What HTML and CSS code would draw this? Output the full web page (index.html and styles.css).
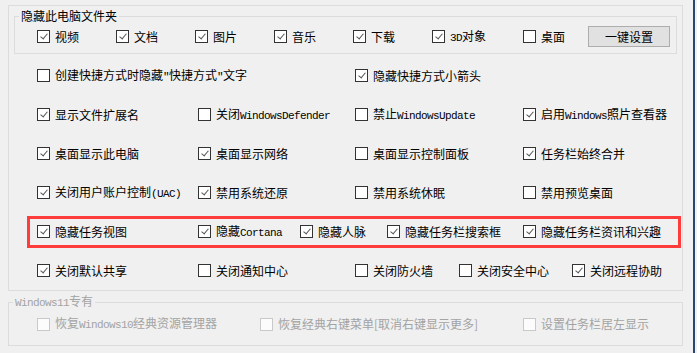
FILE: index.html
```html
<!DOCTYPE html>
<html>
<head>
<meta charset="utf-8">
<link rel="stylesheet" href="styles.css">
</head>
<body>
<div class="panel">
  <fieldset class="group">
    <legend>隐藏此电脑文件夹</legend>
    <div class="grow">
      <label class="cb w79"><span class="box on"></span><span class="t">视频</span></label>
      <label class="cb w79"><span class="box on"></span><span class="t">文档</span></label>
      <label class="cb w79"><span class="box on"></span><span class="t">图片</span></label>
      <label class="cb w79"><span class="box on"></span><span class="t">音乐</span></label>
      <label class="cb w79"><span class="box on"></span><span class="t">下载</span></label>
      <label class="cb w91"><span class="box on"></span><span class="t"><span class="en">3D</span>对象</span></label>
      <label class="cb w65"><span class="box"></span><span class="t">桌面</span></label>
      <button class="btn">一键设置</button>
    </div>
  </fieldset>
  <div class="rows">
    <div class="row">
      <label class="cb w318"><span class="box"></span><span class="t">创建快捷方式时隐藏<span class="en">"</span>快捷方式<span class="en">"</span>文字</span></label>
      <label class="cb"><span class="box on"></span><span class="t">隐藏快捷方式小箭头</span></label>
    </div>
    <div class="row">
      <label class="cb w161"><span class="box on"></span><span class="t">显示文件扩展名</span></label>
      <label class="cb w157"><span class="box"></span><span class="t">关闭<span class="en">WindowsDefender</span></span></label>
      <label class="cb w168"><span class="box"></span><span class="t">禁止<span class="en">WindowsUpdate</span></span></label>
      <label class="cb"><span class="box on"></span><span class="t">启用<span class="en">Windows</span>照片查看器</span></label>
    </div>
    <div class="row">
      <label class="cb w161"><span class="box on"></span><span class="t">桌面显示此电脑</span></label>
      <label class="cb w157"><span class="box on"></span><span class="t">桌面显示网络</span></label>
      <label class="cb w168"><span class="box"></span><span class="t">桌面显示控制面板</span></label>
      <label class="cb"><span class="box on"></span><span class="t">任务栏始终合并</span></label>
    </div>
    <div class="row">
      <label class="cb w161"><span class="box on"></span><span class="t">关闭用户账户控制<span class="en">(UAC)</span></span></label>
      <label class="cb w157"><span class="box on"></span><span class="t">禁用系统还原</span></label>
      <label class="cb w168"><span class="box"></span><span class="t">禁用系统休眠</span></label>
      <label class="cb"><span class="box"></span><span class="t">禁用预览桌面</span></label>
    </div>
    <div class="row hl">
      <div class="hlbox">
        <label class="cb w161"><span class="box on"></span><span class="t">隐藏任务视图</span></label>
        <label class="cb w102"><span class="box on"></span><span class="t">隐藏<span class="en">Cortana</span></span></label>
        <label class="cb w87"><span class="box on"></span><span class="t">隐藏人脉</span></label>
        <label class="cb w136"><span class="box on"></span><span class="t">隐藏任务栏搜索框</span></label>
        <label class="cb"><span class="box on"></span><span class="t">隐藏任务栏资讯和兴趣</span></label>
      </div>
    </div>
    <div class="row">
      <label class="cb w161"><span class="box on"></span><span class="t">关闭默认共享</span></label>
      <label class="cb w157"><span class="box"></span><span class="t">关闭通知中心</span></label>
      <label class="cb w104"><span class="box"></span><span class="t">关闭防火墙</span></label>
      <label class="cb w113"><span class="box"></span><span class="t">关闭安全中心</span></label>
      <label class="cb"><span class="box on"></span><span class="t">关闭远程协助</span></label>
    </div>
  </div>
</div>
<fieldset class="win11">
  <legend><span class="en">Windows11</span>专有</legend>
  <div class="wrow">
    <label class="cb dis w223"><span class="box"></span><span class="t">恢复<span class="en">Windows10</span>经典资源管理器</span></label>
    <label class="cb dis w263"><span class="box"></span><span class="t">恢复经典右键菜单[取消右键显示更多]</span></label>
    <label class="cb dis"><span class="box"></span><span class="t">设置任务栏居左显示</span></label>
  </div>
</fieldset>
<div class="edge"></div>
</body>
</html>
```

FILE: styles.css
```css
html, body {
  margin: 0;
  padding: 0;
  background: #f0f0f0;
  width: 697px;
  height: 353px;
  overflow: hidden;
  position: relative;
}
body {
  font-family: "Noto Sans CJK SC", sans-serif;
  font-size: 12px;
  color: #000;
}
.en {
  font-family: "Liberation Mono", monospace;
  font-size: 11px;
  letter-spacing: -0.6px;
}
.panel {
  box-sizing: border-box;
  margin: 5px 0 0 8px;
  width: 675px;
  height: 286px;
  border: 1px solid #dcdcdc;
}
fieldset {
  margin: 0;
  padding: 0;
  border: 1px solid #dcdcdc;
  min-width: 0;
}
legend {
  padding: 0 2px;
  line-height: 14px;
  font-size: 12px;
}
.group {
  box-sizing: border-box;
  margin: 3px 0 0 5px;
  width: 663px;
  padding: 3px 0 6px 22px;
}
.group legend {
  margin-left: -18px;
}
.grow {
  display: flex;
  align-items: center;
  height: 21px;
}
.btn {
  box-sizing: border-box;
  width: 82px;
  height: 21px;
  margin: 0;
  padding: 0;
  border: 1px solid #adadad;
  background: #e1e1e1;
  font-family: "Noto Sans CJK SC", sans-serif;
  font-size: 12px;
  color: #000;
  line-height: 18px;
}
.rows {
  margin-top: 2px;
}
.row {
  display: flex;
  align-items: center;
  height: 39px;
  padding-left: 28px;
}
.row.hl {
  padding-left: 18px;
}
.hlbox {
  box-sizing: border-box;
  display: flex;
  align-items: center;
  width: 654px;
  height: 32px;
  border: 3px solid #ff3c3c;
  padding-left: 7px;
}
.cb {
  display: flex;
  align-items: center;
  flex: none;
  white-space: nowrap;
  line-height: 14px;
}
.box {
  box-sizing: border-box;
  width: 13px;
  height: 13px;
  border: 1px solid #333;
  background: #fff;
  margin-right: 5px;
  flex: none;
  position: relative;
}
.box.on::after {
  content: "";
  position: absolute;
  left: 3.5px;
  top: 1px;
  width: 3px;
  height: 6px;
  border-right: 1.3px solid #555;
  border-bottom: 1.3px solid #555;
  transform: rotate(40deg);
  transform-origin: center;
}
.dis {
  color: #a3a3a3;
}
.dis .box {
  border-color: #c9c9c9;
  background: #fcfcfc;
}
.w65 { width: 65px; }
.w79 { width: 79px; }
.w87 { width: 87px; }
.w91 { width: 91px; }
.w102 { width: 102px; }
.w104 { width: 104px; }
.w113 { width: 113px; }
.w136 { width: 136px; }
.w157 { width: 157px; }
.w161 { width: 161px; }
.w168 { width: 168px; }
.w223 { width: 223px; }
.w263 { width: 263px; }
.w318 { width: 318px; }
.win11 {
  box-sizing: border-box;
  margin: 3px 0 0 8px;
  width: 675px;
  padding: 3px 0 10px 28px;
}
.win11 legend {
  color: #a3a3a3;
  margin-left: -24px;
}
.wrow {
  display: flex;
  align-items: center;
  height: 22px;
}
.edge {
  position: absolute;
  top: 0;
  left: 693px;
  width: 2px;
  height: 353px;
  background: #2a4670;
}
```
